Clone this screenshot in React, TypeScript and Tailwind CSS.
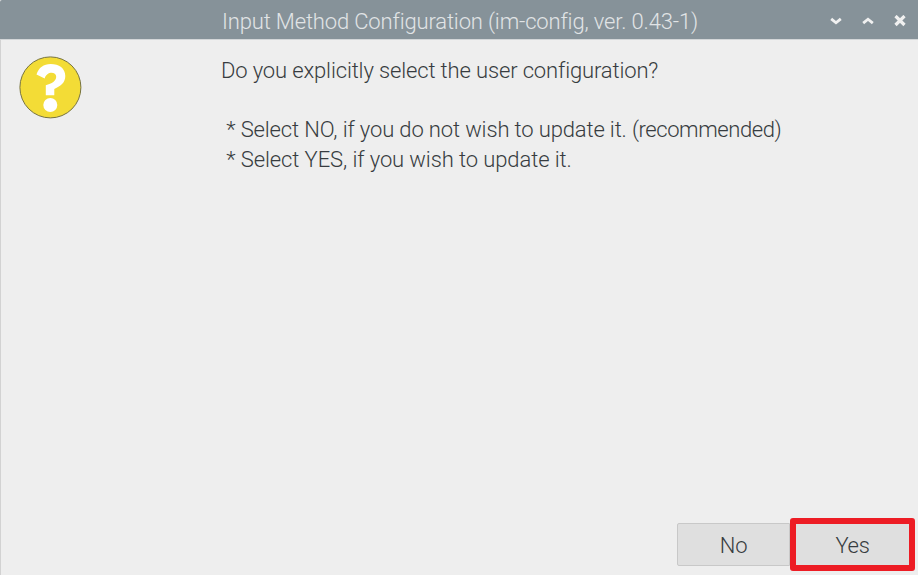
import React from "react";

function QuestionIcon() {
  return (
    <svg className="h-16 w-16 shrink-0" viewBox="0 0 64 64" fill="none">
      <circle cx="32.4" cy="31.4" r="30.5" fill="#f3dc36" stroke="#77733f" strokeWidth="1" />
      <path d="M18.5 18.5C20.8 11.5 25.5 8 32.7 8C41 8 47.3 12.3 47.3 20C47.3 26.5 43 30 36.3 33V39.3H27.8V29.3C34 27.5 38.2 25 38.2 20.8C38.2 15.3 28.5 15 26.7 22.5Z" fill="#fff" />
      <circle cx="32.3" cy="49" r="7" fill="#fff" />
    </svg>
  );
}

function WindowControls() {
  return (
    <div className="flex items-center gap-5 pr-3 pt-[3px] text-[#f0f0f0]">
      <svg className="h-3 w-3" viewBox="0 0 12 12" fill="none" stroke="currentColor" strokeWidth="2.8">
        <path d="M1.2 3.8L6 7.8L10.8 3.8" />
      </svg>
      <svg className="h-3 w-3" viewBox="0 0 12 12" fill="none" stroke="currentColor" strokeWidth="2.8">
        <path d="M1.2 8.2L6 4.2L10.8 8.2" />
      </svg>
      <svg className="h-3 w-3" viewBox="0 0 12 12" fill="none" stroke="currentColor" strokeWidth="3.2">
        <path d="M1.5 1L10.5 10M10.5 1L1.5 10" />
      </svg>
    </div>
  );
}

export default function App() {
  return (
    <div className="flex h-[575px] w-[918px] flex-col overflow-hidden bg-[#eeeeee] font-[Roboto,sans-serif] text-[22px] font-light text-[#373c40]">
      <header className="flex h-[39px] shrink-0 items-center justify-between rounded-tl-[2px] bg-[#869299] pl-[222px]">
        <h1 className="whitespace-nowrap pt-[3px] leading-[29px] tracking-[-0.15px] text-[#e1e4e6]">Input Method Configuration (im-config, ver. 0.43-1)</h1>
        <WindowControls />
      </header>
      <main className="flex flex-1 flex-col border-l border-t border-l-[#d2d2d2] border-t-[#d3d6d8]">
        <div className="flex flex-1 pl-[17px] pt-4">
          <QuestionIcon />
          <div className="ml-[139px] whitespace-pre leading-[29.5px]">
            <p className="tracking-[-0.14px]">Do you explicitly select the user configuration?</p>
            <p> </p>
            <p className="tracking-[-0.14px]"> * Select NO, if you do not wish to update it. <span className="tracking-[-0.42px]">(recommended)</span></p>
            <p className="tracking-[-0.1px]"> * Select YES, if you wish to update it.</p>
          </div>
        </div>
        <div className="flex items-center justify-end pb-1 pr-[3px]">
          <button className="h-[43px] w-[113px] rounded-l-[2px] border border-[#c8c8c8] bg-[#dfdfdf] pt-[2px] tracking-[-0.3px]">No</button>
          <button className="h-[53px] w-[125px] rounded-[3px] border-6 border-[#ed1c24] bg-[#dfdfdf] pt-[2px] tracking-[-0.3px]">Yes</button>
        </div>
      </main>
    </div>
  );
}
